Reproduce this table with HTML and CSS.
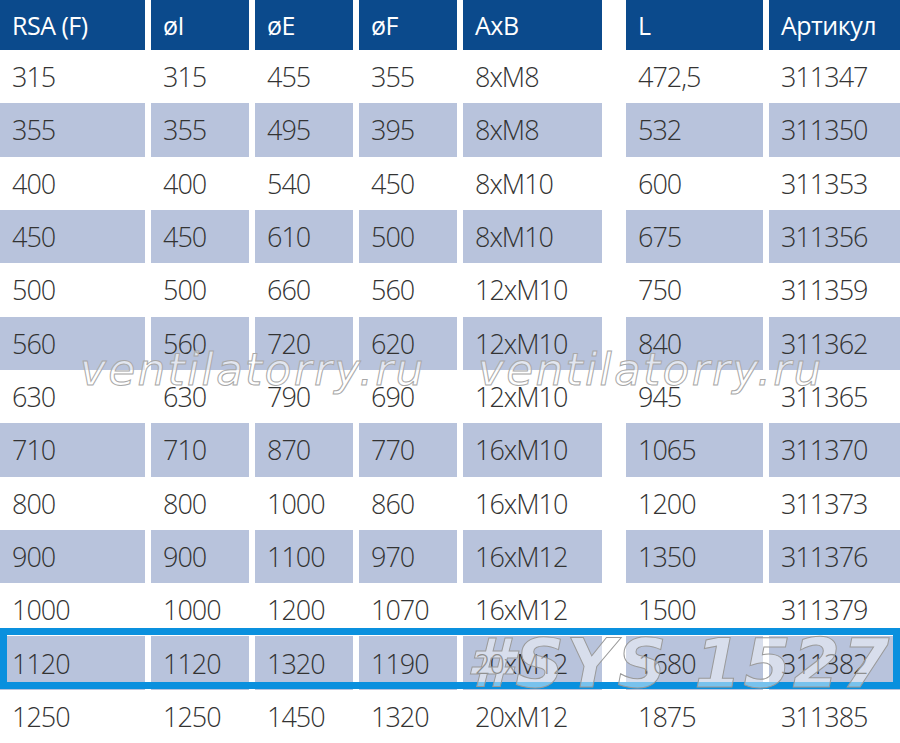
FILE: index.html
```html
<!DOCTYPE html>
<html lang="ru">
<head>
<meta charset="utf-8">
<title>RSA (F)</title>
<link rel="stylesheet" href="styles.css">
</head>
<body>
<div class="sheet">
  <div class="table">
    <div class="row head">
      <div class="cell">RSA (F)</div><div class="cell">øI</div><div class="cell">øE</div><div class="cell">øF</div><div class="cell">AxB</div><div class="cell c6">L</div><div class="cell">Артикул</div>
    </div>
    <div class="row">
      <div class="cell">315</div><div class="cell">315</div><div class="cell">455</div><div class="cell">355</div><div class="cell">8xM8</div><div class="cell c6">472,5</div><div class="cell">311347</div>
    </div>
    <div class="row alt">
      <div class="cell">355</div><div class="cell">355</div><div class="cell">495</div><div class="cell">395</div><div class="cell">8xM8</div><div class="cell c6">532</div><div class="cell">311350</div>
    </div>
    <div class="row">
      <div class="cell">400</div><div class="cell">400</div><div class="cell">540</div><div class="cell">450</div><div class="cell">8xM10</div><div class="cell c6">600</div><div class="cell">311353</div>
    </div>
    <div class="row alt">
      <div class="cell">450</div><div class="cell">450</div><div class="cell">610</div><div class="cell">500</div><div class="cell">8xM10</div><div class="cell c6">675</div><div class="cell">311356</div>
    </div>
    <div class="row">
      <div class="cell">500</div><div class="cell">500</div><div class="cell">660</div><div class="cell">560</div><div class="cell">12xM10</div><div class="cell c6">750</div><div class="cell">311359</div>
    </div>
    <div class="row alt">
      <div class="cell">560</div><div class="cell">560</div><div class="cell">720</div><div class="cell">620</div><div class="cell">12xM10</div><div class="cell c6">840</div><div class="cell">311362</div>
    </div>
    <div class="row">
      <div class="cell">630</div><div class="cell">630</div><div class="cell">790</div><div class="cell">690</div><div class="cell">12xM10</div><div class="cell c6">945</div><div class="cell">311365</div>
    </div>
    <div class="row alt">
      <div class="cell">710</div><div class="cell">710</div><div class="cell">870</div><div class="cell">770</div><div class="cell">16xM10</div><div class="cell c6">1065</div><div class="cell">311370</div>
    </div>
    <div class="row">
      <div class="cell">800</div><div class="cell">800</div><div class="cell">1000</div><div class="cell">860</div><div class="cell">16xM10</div><div class="cell c6">1200</div><div class="cell">311373</div>
    </div>
    <div class="row alt">
      <div class="cell">900</div><div class="cell">900</div><div class="cell">1100</div><div class="cell">970</div><div class="cell">16xM12</div><div class="cell c6">1350</div><div class="cell">311376</div>
    </div>
    <div class="row">
      <div class="cell">1000</div><div class="cell">1000</div><div class="cell">1200</div><div class="cell">1070</div><div class="cell">16xM12</div><div class="cell c6">1500</div><div class="cell">311379</div>
    </div>
    <div class="row alt">
      <div class="cell">1120</div><div class="cell">1120</div><div class="cell">1320</div><div class="cell">1190</div><div class="cell">20xM12</div><div class="cell c6">1680</div><div class="cell">311382</div>
    </div>
    <div class="row">
      <div class="cell">1250</div><div class="cell">1250</div><div class="cell">1450</div><div class="cell">1320</div><div class="cell">20xM12</div><div class="cell c6">1875</div><div class="cell">311385</div>
    </div>
  </div>

  <div class="mark mark-left">ventilatorry.ru</div>
  <div class="mark mark-right">ventilatorry.ru</div>
  <div class="highlight"></div>
  <div class="sys">#SYS 1527</div>
</div>
</body>
</html>
```

FILE: styles.css
```css
html, body {
  margin: 0;
  padding: 0;
  background: #ffffff;
}

.sheet {
  position: relative;
  width: 900px;
  height: 743px;
  overflow: hidden;
}

.table {
  display: flex;
  flex-direction: column;
  height: 743px;
}

.row {
  display: grid;
  grid-template-columns: 145px 98px 98px 98px 139px 12px 137px 131px;
  column-gap: 6px;
  flex: 1 1 0;
  font-family: "Open Sans", "Noto Sans", sans-serif;
  font-weight: 300;
  font-size: 27px;
  letter-spacing: -1px;
  color: #333333;
}

.row.head {
  flex: 0 0 50px;
  font-weight: 400;
  font-size: 25px;
  letter-spacing: -0.5px;
  color: #ffffff;
}

.cell {
  display: flex;
  align-items: center;
  padding-left: 12px;
  white-space: nowrap;
}

.c6 {
  grid-column: 7;
}

.head .cell {
  background: #0b4a8c;
}

.alt .cell {
  background: #b8c3dc;
}

.mark {
  position: absolute;
  top: 344px;
  font-family: "DejaVu Sans", sans-serif;
  font-style: italic;
  font-size: 44px;
  letter-spacing: 2.2px;
  color: rgba(255, 255, 255, 0.6);
  -webkit-text-stroke: 1px #a8a8a8;
  white-space: nowrap;
}

.mark-left {
  left: 80px;
}

.mark-right {
  left: 478px;
}

.highlight {
  position: absolute;
  left: 0;
  top: 628px;
  width: 886px;
  height: 47px;
  border: 7px solid #0a90de;
}

.sys {
  position: absolute;
  left: 466px;
  top: 624px;
  font-family: "DejaVu Sans", sans-serif;
  font-weight: bold;
  font-style: italic;
  font-size: 68px;
  line-height: 80px;
  letter-spacing: 2px;
  color: rgba(255, 255, 255, 0.45);
  -webkit-text-stroke: 1px #9a9a9a;
  white-space: nowrap;
}
```
